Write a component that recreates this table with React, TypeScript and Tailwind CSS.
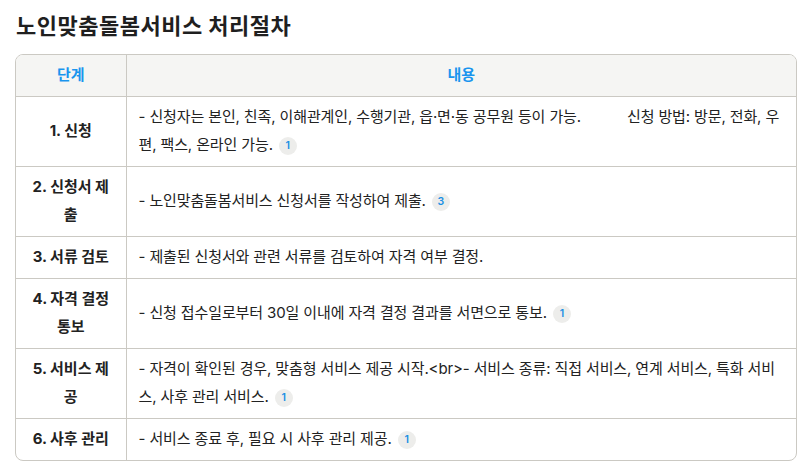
import React from "react";

const Cite = ({ n }: { n: string }) => (
  <span className="ml-[6px] inline-flex h-[18px] w-[18px] items-center justify-center rounded-full bg-[#ededeb] align-middle text-[10.5px] font-semibold leading-none tracking-normal text-[#1a8fe3]">
    {n}
  </span>
);

const rows: { step: string; content: React.ReactNode }[] = [
  {
    step: "1. 신청",
    content: (
      <>
        - 신청자는 본인, 친족, 이해관계인, 수행기관, 읍·면·동 공무원 등이 가능.
        <span className="inline-block w-[46px]" />
        신청 방법: 방문, 전화, 우편, 팩스, 온라인 가능.
        <Cite n="1" />
      </>
    ),
  },
  {
    step: "2. 신청서 제출",
    content: (
      <>
        - 노인맞춤돌봄서비스 신청서를 작성하여 제출.
        <Cite n="3" />
      </>
    ),
  },
  {
    step: "3. 서류 검토",
    content: <>- 제출된 신청서와 관련 서류를 검토하여 자격 여부 결정.</>,
  },
  {
    step: "4. 자격 결정 통보",
    content: (
      <>
        - 신청 접수일로부터 30일 이내에 자격 결정 결과를 서면으로 통보.
        <Cite n="1" />
      </>
    ),
  },
  {
    step: "5. 서비스 제공",
    content: (
      <>
        - 자격이 확인된 경우, 맞춤형 서비스 제공 시작.&lt;br&gt;- 서비스 종류: 직접 서비스, 연계 서비스, 특화 서비스, 사후 관리 서비스.
        <Cite n="1" />
      </>
    ),
  },
  {
    step: "6. 사후 관리",
    content: (
      <>
        - 서비스 종료 후, 필요 시 사후 관리 제공.
        <Cite n="1" />
      </>
    ),
  },
];

export default function App() {
  return (
    <div
      className="min-h-[470px] w-[804px] bg-white px-[15px] pt-[10px] text-[#222]"
      style={{ fontFamily: 'Inter, "Noto Sans CJK KR", sans-serif' }}
    >
      <h1 className="pl-[1px] text-[22px] font-bold leading-[32px] tracking-[0.5px] text-[#1f1f1f]">
        노인맞춤돌봄서비스 처리절차
      </h1>
      <div className="mt-[12px] w-[782px] overflow-hidden rounded-[8px] border border-[#cbc9c3]">
        <table className="w-full border-collapse text-[15px] leading-[28px]">
          <thead>
            <tr className="bg-[#f5f5f3]">
              <th className="h-[41px] w-[110px] border-r border-[#cbc9c3] px-[12px] text-center font-bold text-[#1a95ee]">
                단계
              </th>
              <th className="px-[12px] text-center font-bold text-[#1a95ee]">내용</th>
            </tr>
          </thead>
          <tbody>
            {rows.map((r, i) => (
              <tr key={i} className="border-t border-[#cbc9c3]">
                <td className="w-[110px] border-r border-[#cbc9c3] px-[12px] py-[6.5px] text-center align-middle font-bold text-[#222]">
                  {r.step}
                </td>
                <td className="px-[12px] py-[6.5px] align-middle tracking-[-0.12px] text-[#222]">{r.content}</td>
              </tr>
            ))}
          </tbody>
        </table>
      </div>
    </div>
  );
}
